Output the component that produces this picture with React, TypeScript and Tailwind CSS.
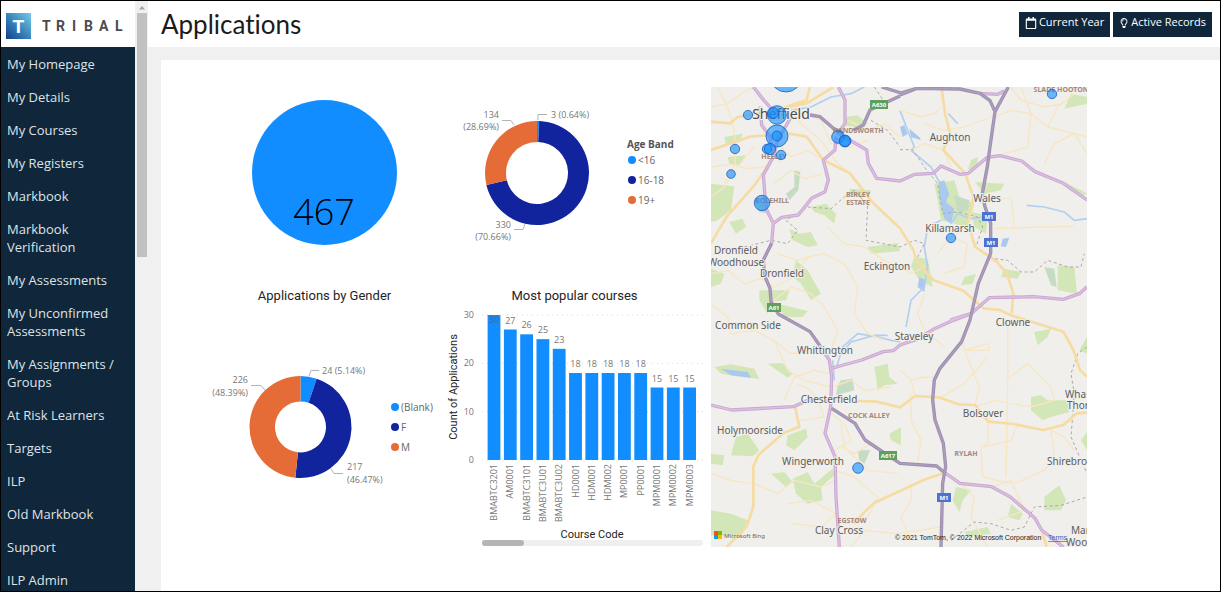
import { FaRegCalendar, FaRegLightbulb } from "react-icons/fa";

type Slice = { label: string; value: number; color: string };

const NAV_ITEMS = [
  "My Homepage",
  "My Details",
  "My Courses",
  "My Registers",
  "Markbook",
  "Markbook Verification",
  "My Assessments",
  "My Unconfirmed Assessments",
  "My Assignments / Groups",
  "At Risk Learners",
  "Targets",
  "ILP",
  "Old Markbook",
  "Support",
  "ILP Admin",
];

const AGE_BANDS: Slice[] = [
  { label: "<16", value: 3, color: "#118dff" },
  { label: "16-18", value: 330, color: "#12239e" },
  { label: "19+", value: 134, color: "#e66c37" },
];

const GENDERS: Slice[] = [
  { label: "(Blank)", value: 24, color: "#118dff" },
  { label: "F", value: 217, color: "#12239e" },
  { label: "M", value: 226, color: "#e66c37" },
];

const COURSES: [string, number][] = [
  ["BMABTC3201", 30],
  ["AM0001", 27],
  ["BMABTC3101", 26],
  ["BMABTC3U01", 25],
  ["BMABTC3U02", 23],
  ["HD0001", 18],
  ["HDM001", 18],
  ["HDM002", 18],
  ["MP0001", 18],
  ["PP0001", 18],
  ["MPM0001", 15],
  ["MPM0002", 15],
  ["MPM0003", 15],
];

function Logo() {
  return (
    <svg viewBox="0 0 134 46" className="h-[46px] w-[134px] shrink-0 bg-white" role="img" aria-label="Tribal">
      <defs>
        <linearGradient id="logo" x1="0" y1="1" x2="1" y2="0">
          <stop offset="0" stopColor="#123f8c" />
          <stop offset="0.5" stopColor="#3a86bd" />
          <stop offset="1" stopColor="#74cbe8" />
        </linearGradient>
      </defs>
      <rect x="5" y="12" width="25" height="26" fill="url(#logo)" />
      <text x="17.5" y="31.5" textAnchor="middle" className="fill-white font-['Roboto',sans-serif] text-[19px] font-bold">
        T
      </text>
      <text x="41 55 71 83 98 114" y="30" className="fill-[#4b4b4d] font-['Roboto',sans-serif] text-[14px] font-bold">
        TRIBAL
      </text>
    </svg>
  );
}

function Sidebar() {
  return (
    <aside className="flex shrink-0 gap-px overflow-hidden">
      <div className="flex w-[134px] flex-col bg-[#10263b]">
        <Logo />
        <nav className="flex flex-col gap-[15px] pt-2 pr-2 pl-1.5 text-[13px] leading-[18px] text-[#dfe3e6]">
          {NAV_ITEMS.map((item) => (
            <a key={item} href="#" className="hover:underline">
              {item}
            </a>
          ))}
        </nav>
      </div>
      <div className="flex w-3 flex-col items-center bg-[#f0f0f0]">
        <svg viewBox="0 0 12 12" className="size-3 shrink-0">
          <path d="M3 8.500L6 5L9 8.500Z" fill="#a3a3a3" />
        </svg>
        <div className="h-[244px] w-[10px] bg-[#c1c1c1]" />
      </div>
    </aside>
  );
}

function Header() {
  const button = "flex h-[25px] items-center gap-0.5 bg-[#10263b] px-1.5 pb-[3px] text-[11px] text-white";
  return (
    <header className="flex h-[46px] shrink-0 items-center justify-between bg-white pr-2 pl-[13px]">
      <h1 className="font-['Lato',sans-serif] text-[26px] leading-8 text-[#1b1b1b] [font-variant-ligatures:none]">
        Applications
      </h1>
      <div className="flex gap-[3px]">
        <button className={button}>
          <FaRegCalendar className="size-3" />
          Current Year
        </button>
        <button className={button}>
          <FaRegLightbulb className="size-[10px]" />
          Active Records
        </button>
      </div>
    </header>
  );
}

function Donut({ data, cx, cy, r, inner }: { data: Slice[]; cx: number; cy: number; r: number; inner: number }) {
  const total = data.reduce((sum, d) => sum + d.value, 0);
  const point = (share: number, radius: number) => {
    const a = share * 2 * Math.PI;
    return `${cx + radius * Math.sin(a)} ${cy - radius * Math.cos(a)}`;
  };
  let start = 0;
  return (
    <g>
      {data.map((d) => {
        const from = start;
        const to = start + d.value / total;
        const large = to - from > 0.5 ? 1 : 0;
        start = to;
        return (
          <path
            key={d.label}
            fill={d.color}
            d={`M${point(from, r)}A${r} ${r} 0 ${large} 1 ${point(to, r)}L${point(to, inner)}A${inner} ${inner} 0 ${large} 0 ${point(from, inner)}Z`}
          />
        );
      })}
    </g>
  );
}

function Legend({ data, x, y }: { data: Slice[]; x: number; y: number }) {
  return (
    <g className="fill-[#666] text-[10px]">
      {data.map((d, i) => (
        <g key={d.label}>
          <circle cx={x} cy={y + i * 20} r="4" fill={d.color} />
          <text x={x + 6} y={y + i * 20 + 4}>
            {d.label}
          </text>
        </g>
      ))}
    </g>
  );
}

function TotalCircle() {
  return (
    <svg viewBox="0 0 231 195" className="h-[195px] w-full">
      <circle cx="115.500" cy="85.500" r="72.500" fill="#118dff" />
      <text x="115" y="138" textAnchor="middle" className="fill-black text-[36px] font-light">
        467
      </text>
    </svg>
  );
}

function GenderChart() {
  return (
    <section>
      <h2 className="text-center font-['Roboto',sans-serif] text-[13px] leading-7 text-[#252423]">
        Applications by Gender
      </h2>
      <svg viewBox="0 0 231 240" className="h-[240px] w-full">
        <Donut data={GENDERS} cx={91.5} cy={117} r={51} inner={25.500} />
        <g fill="none" stroke="#b3b3b3">
          <path d="M100 66L102 60.500H110" />
          <path d="M42 75.500H52L56 80" />
          <path d="M122 159L125 163.500H134" />
        </g>
        <g className="fill-[#777] text-[9px]">
          <text x="113" y="64">24 (5.14%)</text>
          <text x="39" y="73" textAnchor="end">226</text>
          <text x="39" y="86" textAnchor="end">(48.39%)</text>
          <text x="138" y="160">217</text>
          <text x="138" y="173">(46.47%)</text>
        </g>
        <Legend data={GENDERS} x={186} y={97} />
      </svg>
    </section>
  );
}

function AgeChart() {
  return (
    <svg viewBox="0 0 269 195" className="h-[195px] w-full">
      <Donut data={AGE_BANDS} cx={97} cy={86} r={52} inner={31} />
      <g fill="none" stroke="#b3b3b3">
        <path d="M98 33V27.500H107" />
        <path d="M62 33.500H71L74 38" />
        <path d="M74 142.500H83L85 137" />
      </g>
      <g className="fill-[#777] text-[9px]">
        <text x="111" y="31">3 (0.64%)</text>
        <text x="59" y="31" textAnchor="end">134</text>
        <text x="59" y="43" textAnchor="end">(28.69%)</text>
        <text x="71" y="141" textAnchor="end">330</text>
        <text x="71" y="153" textAnchor="end">(70.66%)</text>
      </g>
      <text x="187" y="61" className="fill-[#555] text-[10px] font-bold">
        Age Band
      </text>
      <Legend data={AGE_BANDS} x={192} y={73} />
    </svg>
  );
}

function CoursesChart() {
  const base = 150;
  const unit = 145 / 30;
  const step = 16.3;
  return (
    <section>
      <h2 className="text-center font-['Roboto',sans-serif] text-[13px] leading-7 text-[#252423]">
        Most popular courses
      </h2>
      <svg viewBox="0 0 269 240" className="h-[240px] w-full">
        {[0, 10, 20, 30].map((tick) => (
          <g key={tick}>
            <line x1="42" x2="263" y1={base - tick * unit} y2={base - tick * unit} stroke="#d9d9d9" strokeDasharray="1 4" />
            <text x="34" y={base - tick * unit + 3} textAnchor="end" className="fill-[#777] text-[9px]">
              {tick}
            </text>
          </g>
        ))}
        {COURSES.map(([code, count], i) => {
          const x = 54 + i * step;
          const top = base - count * unit;
          return (
            <g key={code} className="fill-[#777] text-[9px]">
              <rect x={x - 6.4} y={top} width="12.800" height={count * unit} fill="#118dff" />
              <text x={x} y={count === 30 ? top + 8 : top - 6} textAnchor="middle" className={count === 30 ? "fill-[#3d6a9c]" : ""}>
                {count}
              </text>
              <text textAnchor="end" transform={`translate(${x + 3} 154) rotate(-90)`}>
                {code}
              </text>
            </g>
          );
        })}
        <g className="fill-[#252423] font-['Roboto',sans-serif] text-[11px]" textAnchor="middle">
          <text transform="translate(17 77) rotate(-90)">Count of Applications</text>
          <text x="152" y="228">Course Code</text>
        </g>
        <rect x="42" y="230" width="221" height="6" rx="3" fill="#efefef" />
        <rect x="42" y="230" width="42" height="6" rx="3" fill="#b5b5b5" />
      </svg>
    </section>
  );
}

// Map geometry is drawn on a 1128 x 1380 grid and scaled to a third.
const MINOR_ROADS = [
  "M0 60L50 50L90 20L130 0",
  "M0 240L60 232L110 245L160 240L187 209",
  "M0 330L40 300L72 250L100 215L130 180",
  "M20 0L50 60L70 130L72 230L40 290",
  "M180 90L240 95L290 80L330 100L360 170L420 180L470 160",
  "M200 170L240 210L290 190L337 219",
  "M190 290L240 250L280 275L330 262",
  "M240 60L270 110L330 160L380 230L420 259",
  "M412 100L470 130L520 110L567 150",
  "M0 560L50 550L100 590L150 575L190 600L250 570L290 510L340 500L400 530",
  "M200 500L260 520L290 510",
  "M190 640L240 600L300 620L340 660L380 730L360 790",
  "M0 650L50 690L60 740L130 730L190 760",
  "M400 530L440 600L430 680L470 740L520 760",
  "M350 420L400 470L460 480L520 520L567 540",
  "M187 760L240 800L300 790L350 810",
  "M190 760L230 850L280 880L357 900",
  "M220 940L250 870L310 850L355 860",
  "M260 890L300 910L320 940L340 990L270 1000",
  "M362 900L420 880L460 910L540 900",
  "M362 980L400 1010L420 1060L370 1090",
  "M392 1080L430 1100L480 1070",
  "M390 1010L400 1080L470 1150L560 1160",
  "M372 1150L430 1170L500 1230L470 1290L400 1310",
  "M130 1190L200 1220L250 1180L330 1200L372 1180",
  "M230 1250L300 1240L375 1280L330 1320L240 1310",
  "M0 1160L60 1180L127 1190",
  "M567 70L630 90L670 80L690 60",
  "M640 110L697 130L760 120L840 90",
  "M600 190L640 170L697 189L720 240",
  "M852 90L900 70L960 80L1010 120L1128 150",
  "M930 0L960 80L950 180L880 200",
  "M1010 120L1040 60L1090 20",
  "M1000 230L1030 170L1090 140L1128 200",
  "M900 0L930 40L1000 60L1060 50",
  "M820 340L900 332L910 420L900 430",
  "M850 425L980 420L1090 418",
  "M567 540L600 560L640 540L617 524",
  "M680 500L720 450L770 470L757 540L700 560",
  "M640 620L620 680L640 730L700 780",
  "M777 700L752 764L780 840L805 900L792 954",
  "M820 790L760 790L830 770L835 790Z",
  "M890 700L890 880L885 1170",
  "M690 931L760 890L830 810",
  "M885 880L950 830L1020 900L1030 940L960 960L850 940L795 960",
  "M832 1004L830 1070L810 1080L815 1170L900 1190",
  "M820 1080L900 1060L920 1010",
  "M1020 1029L1030 1110L1000 1150L910 1190",
  "M1020 1030L1060 1050L1090 1090",
  "M600 880L640 870L680 872",
  "M600 920L600 1000L630 1060L620 1130",
  "M567 850L600 880L612 927",
  "M600 1190L600 1240L570 1290L600 1360",
  "M740 1180L790 1230L780 1290L830 1380",
  "M842 1200L900 1180L940 1270L860 1300",
  "M420 1380L460 1330L560 1340L690 1320",
];

const MAJOR_ROADS = [
  "M692 4L702 79L717 139L697 189L762 259L787 329L772 409L792 479L857 524L887 559L907 619L902 679",
  "M567 424L607 489L617 524L667 579L757 611L817 664L867 669L897 684L1057 734L1087 789L1107 849L1128 869",
  "M232 139L287 149L337 219L417 259L487 349L567 424",
  "M0 104L57 109L80 90L147 80",
  "M0 189L117 149L177 144",
  "M187 214L127 299L47 389L0 469",
  "M297 0L287 39L197 69",
  "M367 0L287 49L237 59L190 90",
  "M252 959L265 1019L217 1039L142 1104L127 1139L127 1259L107 1319L47 1380",
  "M362 939L497 944L567 961L612 927L682 931L742 952L792 954L832 1004L907 1011L997 1029L1057 1014L1097 979L1128 977",
  "M427 1309L487 1249L567 1212L637 1179L697 1159",
  "M992 1329L1007 1380",
];

const TRUNK_ROADS = [
  "M127 0L162 44L190 75L240 90L200 160L187 209",
  "M147 59L152 114L177 149L187 209L157 264L162 329L167 369L187 409L182 469",
  "M332 784L355 819L362 869L359 959L342 1039L372 1109L375 1229L385 1380",
  "M187 409L212 391L262 384L302 334L342 314L352 279L337 219L372 189L375 149",
  "M382 0L402 39L402 109L382 139L467 189L472 229L497 274L567 282L612 262L667 259L690 237L747 262L772 259L829 211L867 206L932 222L972 254L1057 289L1128 339",
  "M362 844L397 834L452 819L517 794L547 791L567 774L617 757L667 727L717 704L782 679L835 632L967 629L1057 637L1107 619L1128 599",
  "M717 699L782 679",
  "M0 954L62 969L247 959L287 941L357 944",
  "M697 1154L747 1189L842 1199L897 1229L972 1294L992 1329L1057 1380",
  "M805 19L860 22L880 12",
];

const MOTORWAYS = [
  "M567 24L617 4L747 6L807 19L837 41L852 74L837 179L829 239L814 319L822 359L839 409L839 499L802 589L777 699L752 764L687 844L670 879L665 939L672 999L697 1069L704 1139L695 1189L690 1380",
  "M892 0L852 74",
  "M567 27L477 69L457 114L427 130",
  "M512 0L570 18L617 4",
  "M297 84L327 89L367 124L397 139",
  "M182 469L157 519L160 564L177 604L180 644L202 681L297 734L332 784",
  "M362 964L432 1009L462 1059L567 1129L677 1137L697 1154",
];

const WOODS = [
  "M0 290L70 298L60 370L20 400L0 405Z",
  "M40 150L95 140L85 165L45 175Z",
  "M50 210L105 205L85 235L55 230Z",
  "M55 405L95 395L105 420L75 440Z",
  "M235 425L265 440L300 435L320 475L290 480L245 460Z",
  "M300 360L345 350L375 380L370 410L340 385L310 375Z",
  "M400 90L440 85L470 110L430 120L400 115Z",
  "M415 305L480 310L475 330L420 325Z",
  "M470 480L560 468L567 492L480 500Z",
  "M0 545L40 560L30 590L0 600Z",
  "M255 520L290 550L330 620L300 640L270 590L245 570Z",
  "M145 610L235 610L225 640L180 645L170 680L145 640Z",
  "M200 650L290 672L275 690L220 690Z",
  "M10 840L60 832L130 845L145 875L90 870L30 860Z",
  "M170 830L215 828L245 860L230 872Z",
  "M75 1050L110 1040L145 1090L125 1108L60 1105Z",
  "M230 1045L285 1025L290 1050L250 1090L225 1075Z",
  "M180 1160L220 1155L245 1185L225 1200Z",
  "M245 1175L290 1155L310 1190L365 1145L370 1165L330 1200L335 1240L290 1250L255 1220Z",
  "M0 1270L60 1280L110 1300L90 1350L0 1345Z",
  "M490 840L530 830L535 870L560 890L520 895L500 910L495 870Z",
  "M535 1040L570 1020L570 1075L540 1060Z",
  "M0 1100L40 1105L35 1135L0 1130Z",
  "M670 290L730 280L745 330L790 350L770 420L690 400L680 340Z",
  "M792 285L880 290L870 310L820 320Z",
  "M780 220L800 210L800 240L770 250Z",
  "M1080 20L1128 30L1128 50L1060 65Z",
  "M1060 285L1110 310L1128 320L1110 330L1070 305Z",
  "M610 510L650 515L665 600L625 580L600 540Z",
  "M760 570L795 560L785 590L750 595Z",
  "M880 545L930 555L920 575L870 570Z",
  "M1040 535L1090 540L1098 620L1040 610Z",
  "M970 735L1020 725L1010 750L980 775Z",
  "M960 930L990 925L1010 940L1070 940L1075 975L1020 990L995 1000L960 970Z",
  "M1128 750L1105 790L1128 800Z",
  "M1128 1035L1110 1060L1128 1090Z",
  "M735 1200L780 1210L755 1240L745 1275L725 1240Z",
  "M900 1250L935 1280L925 1300L890 1290Z",
  "M1000 1230L1045 1195L1065 1240L1050 1270L1000 1270Z",
  "M760 1335L830 1320L840 1340L770 1350Z",
  "M780 375L830 385L825 440L790 420Z",
];

const DARK_WOODS = [
  "M250 250L268 255L262 310L235 340L225 320L250 300Z",
  "M390 880L425 875L430 910L375 925L380 895Z",
  "M440 1090L478 1090L460 1130L445 1120Z",
  "M1000 540L1030 545L1037 600L1020 595Z",
  "M730 325L775 340L770 370L740 380Z",
  "M130 340L160 350L175 380L145 375Z",
];

const LAKES = [
  "M683 285L700 280L715 320L705 345L730 365L720 410L700 395L685 330Z",
  "M595 125L625 150L630 160L600 150Z",
  "M567 120L580 115L590 140L575 150Z",
  "M875 455L895 452L885 480L870 478Z",
  "M30 845L110 855L120 872L60 865Z",
  "M625 570L645 580L640 615L620 600Z",
];

const RIVERS = [
  "M567 70L590 130L610 180L600 190L660 240L685 285",
  "M720 410L740 380L780 395L820 390",
  "M690 400L650 420L640 480L650 540L640 600L600 640L585 720",
  "M377 840L395 780L440 740L500 750L540 760L567 765",
  "M395 795L420 765L490 745L530 745",
  "M947 355L1000 360L1060 375L1090 400L1128 395",
  "M240 70L300 60L360 30L420 20L460 0",
  "M712 80L740 110",
  "M365 820L370 880",
];

const BOUNDARIES = [
  "M100 480L180 460L230 470L260 430L225 400L290 360L360 365L400 330L430 310L470 355L465 460L567 480L610 460L640 470L620 510",
  "M567 188L605 188L640 240L680 290L695 380L740 375L800 390L815 420L795 480L850 515L890 520L930 555L970 555L1010 520L1070 540L1110 540L1120 500",
  "M1128 780L1100 800L1080 860L1090 920L1080 1050L1128 1160",
  "M720 1360L790 1305L840 1310L900 1330L940 1320L970 1260L1050 1255L1128 1230",
  "M490 0L510 30L530 60",
  "M480 100L530 130L567 180",
];

const TOWNS: [string, number, number][] = [
  ["Aughton", 239, 54],
  ["Wales", 276, 115],
  ["Killamarsh", 239, 145],
  ["Eckington", 176, 183],
  ["Dronfield", 25, 167],
  ["Woodhouse", 25, 179],
  ["Dronfield", 71, 190],
  ["Clowne", 302, 239],
  ["Common Side", 37, 242],
  ["Staveley", 203, 253],
  ["Whittington", 114, 267],
  ["Chesterfield", 118, 316],
  ["Bolsover", 272, 330],
  ["Holymoorside", 39, 347],
  ["Wingerworth", 102, 378],
  ["Clay Cross", 128, 447],
];

const DISTRICTS: [string, number, number][] = [
  ["SLADE HOOTON", 350, 5],
  ["HANDSWORTH", 147, 46],
  ["HEELEY", 63, 72],
  ["BOLEHILL", 61, 116],
  ["BIRLEY", 147, 110],
  ["ESTATE", 147, 118],
  ["COCK ALLEY", 158, 331],
  ["RYLAH", 255, 369],
  ["EGSTOW", 141, 436],
];

const SHIELDS: [string, number, number, string][] = [
  ["A630", 168, 18, "#5da05d"],
  ["A61", 63, 221, "#5da05d"],
  ["A617", 177, 369, "#5da05d"],
  ["M1", 278, 130, "#4c73d2"],
  ["M1", 280, 156, "#4c73d2"],
  ["M1", 233, 411, "#4c73d2"],
];

const BUBBLES: [number, number, number][] = [
  [75, -11, 16],
  [37, 28, 4.6],
  [66, 28, 9.3],
  [62, 26, 5.5],
  [66, 49, 11],
  [66, 49, 5],
  [56, 62, 4.7],
  [59, 62, 5.6],
  [70, 68, 4.7],
  [24, 62, 4.7],
  [20, 87, 4.3],
  [51, 116, 7.7],
  [127, 50, 6.3],
  [134, 54, 6],
  [134, 54, 5.500],
  [341, 7, 4.7],
  [240, 151, 4.7],
  [147, 381, 5.3],
];

function Lines({ paths, color, width }: { paths: string[]; color: string; width: number }) {
  return <path d={paths.join("")} fill="none" stroke={color} strokeWidth={width} strokeLinejoin="round" />;
}

function MapView() {
  return (
    <svg
      viewBox="0 0 376 460"
      preserveAspectRatio="xMidYMid slice"
      className="h-[460px] w-full bg-[#f0efec] font-['Noto_Sans',sans-serif]"
    >
      <g transform="scale(0.33333)">
        <path d={WOODS.join("")} fill="#d3e6b8" />
        <path d={DARK_WOODS.join("")} fill="#c6dcc2" />
        <path d={LAKES.join("")} fill="#a9c9ee" />
        <Lines paths={RIVERS} color="#b3cff0" width={5} />
        <Lines paths={MINOR_ROADS} color="#f7e6c2" width={4} />
        <path d={BOUNDARIES.join("")} fill="none" stroke="#aaa9a6" strokeWidth="3" strokeDasharray="9 8" />
        <Lines paths={MAJOR_ROADS} color="#f6dca2" width={8} />
        <Lines paths={TRUNK_ROADS} color="#c9a8d2" width={10} />
        <Lines paths={TRUNK_ROADS} color="#dcc0e1" width={4} />
        <Lines paths={MOTORWAYS} color="#9c8cad" width={10} />
        <Lines paths={MOTORWAYS} color="#ac9dbc" width={5} />
      </g>
      <g className="fill-[#a5887b] text-[7px] font-bold" textAnchor="middle">
        {DISTRICTS.map(([name, x, y]) => (
          <text key={name} x={x} y={y}>
            {name}
          </text>
        ))}
      </g>
      <g className="fill-[#5c5c5c] stroke-[#f0efec] stroke-2 text-[10px]" paintOrder="stroke" textAnchor="middle">
        {TOWNS.map(([name, x, y]) => (
          <text key={`${name}-${y}`} x={x} y={y}>
            {name}
          </text>
        ))}
        <text x="354" y="311" textAnchor="start">Wha</text>
        <text x="356" y="322" textAnchor="start">Thor</text>
        <text x="336" y="378" textAnchor="start">Shirebrook</text>
        <text x="360" y="447" textAnchor="start">Mar</text>
        <text x="355" y="459" textAnchor="start">Wood</text>
        <text x="70" y="32" className="fill-[#4d4d4d] text-[14px]">
          Sheffield
        </text>
      </g>
      {SHIELDS.map(([name, x, y, color]) => (
        <g key={`${name}-${y}`}>
          <rect x={x - (name.length > 3 ? 9 : 7)} y={y - 5} width={name.length > 3 ? 18 : 14} height="9" fill={color} />
          <text x={x} y={y + 2} textAnchor="middle" className="fill-white text-[6px] font-bold">
            {name}
          </text>
        </g>
      ))}
      <g fill="#118dff" fillOpacity="0.6" stroke="#1a5fc4" strokeOpacity="0.8">
        {BUBBLES.map(([x, y, r], i) => (
          <circle key={i} cx={x} cy={y} r={r} />
        ))}
      </g>
      <g>
        <rect x="3" y="444" width="4" height="4" fill="#f25022" />
        <rect x="7" y="444" width="4" height="4" fill="#7fba00" />
        <rect x="3" y="448" width="4" height="4" fill="#00a4ef" />
        <rect x="7" y="448" width="4" height="4" fill="#ffb900" />
        <text x="13" y="451" className="fill-[#666] text-[6px]">
          Microsoft Bing
        </text>
      </g>
      <g className="fill-[#222] font-['Liberation_Sans',sans-serif] text-[7px]">
        <text x="184" y="453">© 2021 TomTom, © 2022 Microsoft Corporation</text>
        <a href="#">
          <text x="337" y="453" className="fill-[#3367c2] underline">
            Terms
          </text>
        </a>
      </g>
    </svg>
  );
}

export default function App() {
  return (
    <div className="flex h-screen overflow-hidden border border-black bg-[#f0f0f0] font-['Open_Sans',sans-serif]">
      <Sidebar />
      <div className="flex min-w-0 flex-1 flex-col">
        <Header />
        <main className="min-h-0 flex-1 pt-[13px] pl-[13px]">
          <div className="flex h-full bg-white pt-[27px] pr-[133px] pl-12">
            <div className="w-[231px] shrink-0">
              <TotalCircle />
              <GenderChart />
            </div>
            <div className="w-[269px] shrink-0">
              <AgeChart />
              <CoursesChart />
            </div>
            <div className="ml-0.5 min-w-0 flex-1">
              <MapView />
            </div>
          </div>
        </main>
      </div>
    </div>
  );
}
